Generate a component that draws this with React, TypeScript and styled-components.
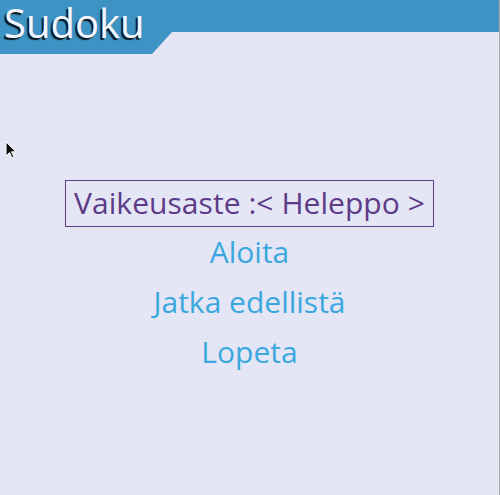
import React, { useState } from "react";
import styled, { createGlobalStyle } from "styled-components";

const GlobalStyle = createGlobalStyle`
  html, body {
    margin: 0;
    padding: 0;
    background: #e4e6f5;
  }
  body {
    font-family: "Open Sans", "Noto Sans", sans-serif;
  }
`;

const levels = ["Helppo", "Heleppo", "Keskitaso", "Vaikea"];

const App = () => {
  const [level, setLevel] = useState(1);

  return (
    <>
      <GlobalStyle />
      <Page>
        <Header>
          <TitleTab>
            <Title>Sudoku</Title>
          </TitleTab>
        </Header>

        <Menu>
          <LevelBox
            onClick={() => setLevel((l) => (l + 1) % levels.length)}
          >
            Vaikeusaste :&lt; {levels[level]} &gt;
          </LevelBox>
          <MenuItem>Aloita</MenuItem>
          <MenuItem>Jatka edellistä</MenuItem>
          <MenuItem>Lopeta</MenuItem>
        </Menu>

        {/* mouse pointer left on the page */}
        <Cursor width="12" height="19" viewBox="0 0 12 19">
          <path
            d="M1 1 L1 15 L4.5 11.5 L7 17 L9 16 L6.5 10.8 L11 10.8 Z"
            fill="#111"
            stroke="#fff"
            strokeWidth="1"
            strokeLinejoin="round"
          />
        </Cursor>
      </Page>
    </>
  );
};

export default App;

const Page = styled.div`
  position: relative;
  width: 499px;
  height: 495px;
  border-right: 1px solid #a9a9b4;
  background: #e4e6f5;
  overflow: hidden;
`;

const Header = styled.div`
  height: 32px;
  background: #3d94c4;
`;

// the tab under the title: its slanted shape is drawn behind the text
const TitleTab = styled.div`
  position: relative;
  width: 172px;
  height: 54px;

  &::before {
    content: "";
    position: absolute;
    inset: 0;
    background: #3d94c4;
    clip-path: polygon(0 0, 172px 0, 172px 32px, 152px 54px, 0 54px);
  }
`;

const Title = styled.h1`
  position: relative;
  margin: 0;
  padding-left: 4px;
  font-size: 40px;
  font-weight: 400;
  line-height: 46px;
  color: #f4f6ff;
  text-shadow: -2px 2px 1px rgba(0, 0, 0, 0.85);
  white-space: nowrap;
`;

const Menu = styled.div`
  display: flex;
  flex-direction: column;
  align-items: center;
  margin-top: 148px;
`;

const LevelBox = styled.div`
  padding: 3px 8px 4px;
  border: 1px solid #5d3f88;
  font-size: 30px;
  line-height: 38px;
  letter-spacing: 0.05px;
  color: #5d3b88;
  cursor: pointer;
  white-space: nowrap;
`;

const MenuItem = styled.div`
  font-size: 30px;
  line-height: 50px;
  color: #3aa8de;
  cursor: pointer;
  &:first-of-type {
    margin-top: 1px;
  }
`;

const Cursor = styled.svg`
  position: absolute;
  left: 5px;
  top: 141px;
`;
